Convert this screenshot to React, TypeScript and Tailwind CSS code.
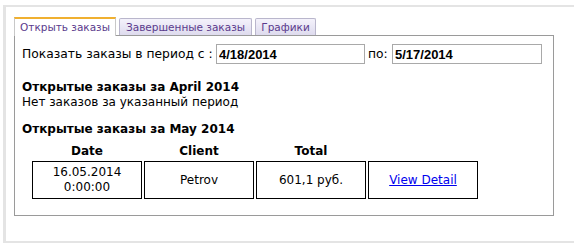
import React from 'react';

const verdana = { fontFamily: '"DejaVu Sans", Verdana, sans-serif' };
const arial = { fontFamily: '"Liberation Sans", Arial, sans-serif' };

const orders = [{ date: '16.05.2014', time: '0:00:00', client: 'Petrov', total: '601,1 руб.' }];

export default function App() {
  return (
    <div className="w-[574px] h-[252px] bg-white pt-[5px] pl-[3px] text-black" style={verdana}>
      <div className="h-[238px] border-l-[3px] border-t-[2px] border-b-[2px] border-[#e4e4e4] pl-[8px] pt-[9px]">
        {/* tabs */}
        <div className="flex items-end h-[19px] gap-[3px]">
          <div className="w-[102px] h-[19px] bg-white border-t-[2px] border-t-[#f0b030] border-x border-x-[#c8c8c8] text-[10.5px] leading-[16px] text-center text-[#5a3a8c] relative top-[1px]">
            Открыть заказы
          </div>
          <div className="w-[133px] h-[17px] bg-gradient-to-b from-[#f4f2fb] to-[#dedbee] border border-[#b9b6cc] border-b-0 rounded-t-[2px] text-[10.5px] leading-[16px] text-center text-[#5a3a8c]">
            Завершенные заказы
          </div>
          <div className="w-[61px] h-[17px] bg-gradient-to-b from-[#f4f2fb] to-[#dedbee] border border-[#b9b6cc] border-b-0 rounded-t-[2px] text-[10.5px] leading-[16px] text-center text-[#5a3a8c]">
            Графики
          </div>
        </div>
        {/* panel */}
        <div className="w-[540px] h-[181px] border border-[#9a9a9a] px-[7px] pt-[8px]">
          <div className="flex items-center text-[12.3px] h-[20px]">
            <span className="w-[194px] whitespace-nowrap">Показать заказы в период с :</span>
            <input
              readOnly
              value="4/18/2014"
              className="w-[149px] h-[20px] border border-[#a9a9a9] px-[2px] text-[13px] font-bold outline-none"
              style={arial}
            />
            <span className="ml-[3px] w-[24px]">по:</span>
            <input
              readOnly
              value="5/17/2014"
              className="w-[150px] h-[20px] border border-[#a9a9a9] px-[2px] text-[13px] font-bold outline-none"
              style={arial}
            />
          </div>

          <div className="mt-[16px] text-[12px] leading-[15px]">
            <div className="font-bold">Открытые заказы за April 2014</div>
            <div>Нет заказов за указанный период</div>
          </div>

          <div className="mt-[12px] text-[12px] leading-[15px] font-bold">Открытые заказы за May 2014</div>

          <table className="ml-[8px] mt-[5px] border-separate border-spacing-[2px] text-[12px]">
            <thead>
              <tr>
                <th className="w-[110px] p-0 h-[15px] leading-[15px] font-bold">Date</th>
                <th className="w-[110px] p-0 leading-[15px] font-bold">Client</th>
                <th className="w-[110px] p-0 leading-[15px] font-bold">Total</th>
                <th className="w-[110px] p-0"></th>
              </tr>
            </thead>
            <tbody>
              {orders.map((o, i) => (
                <tr key={i}>
                  <td className="w-[110px] h-[38px] p-0 border border-black text-center leading-[15px]">
                    {o.date}
                    <br />
                    {o.time}
                  </td>
                  <td className="w-[110px] p-0 border border-black text-center">{o.client}</td>
                  <td className="w-[110px] p-0 border border-black text-center">{o.total}</td>
                  <td className="w-[110px] p-0 border border-black text-center">
                    <a href="#" className="text-[#0000ee] underline">View Detail</a>
                  </td>
                </tr>
              ))}
            </tbody>
          </table>
        </div>
      </div>
    </div>
  );
}
